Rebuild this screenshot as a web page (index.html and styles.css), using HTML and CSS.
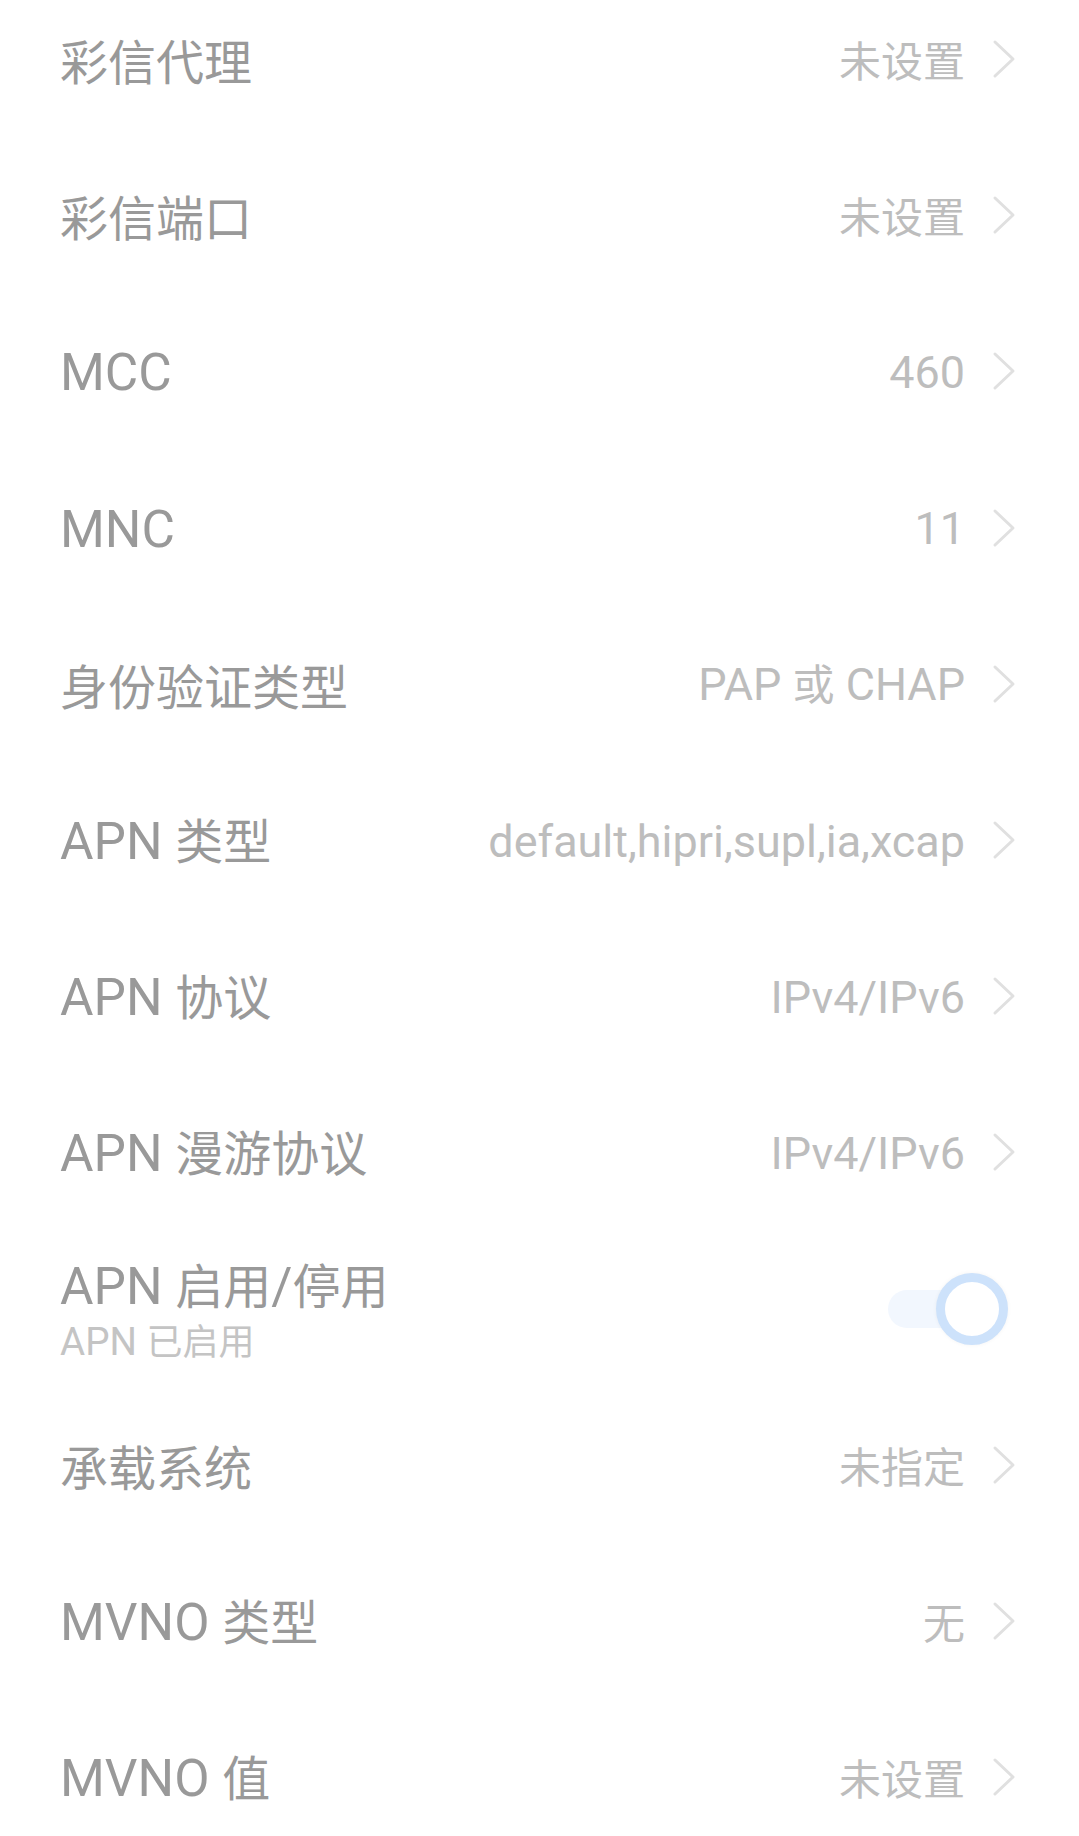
FILE: index.html
```html
<!DOCTYPE html>
<html lang="zh-CN">
<head>
<meta charset="utf-8">
<title>APN</title>
<link rel="stylesheet" href="styles.css">
</head>
<body>
<div class="list">
  <div class="row">
    <div class="title">彩信代理</div>
    <div class="end"><span class="value">未设置</span><svg class="chev" viewBox="0 0 24 40"><polyline points="3,3 21,20 3,37"/></svg></div>
  </div>
  <div class="row">
    <div class="title">彩信端口</div>
    <div class="end"><span class="value">未设置</span><svg class="chev" viewBox="0 0 24 40"><polyline points="3,3 21,20 3,37"/></svg></div>
  </div>
  <div class="row">
    <div class="title"><span class="en">MCC</span></div>
    <div class="end"><span class="value"><span class="en">460</span></span><svg class="chev" viewBox="0 0 24 40"><polyline points="3,3 21,20 3,37"/></svg></div>
  </div>
  <div class="row">
    <div class="title"><span class="en">MNC</span></div>
    <div class="end"><span class="value"><span class="en">11</span></span><svg class="chev" viewBox="0 0 24 40"><polyline points="3,3 21,20 3,37"/></svg></div>
  </div>
  <div class="row">
    <div class="title">身份验证类型</div>
    <div class="end"><span class="value"><span class="en">PAP </span>或<span class="en"> CHAP</span></span><svg class="chev" viewBox="0 0 24 40"><polyline points="3,3 21,20 3,37"/></svg></div>
  </div>
  <div class="row">
    <div class="title"><span class="en">APN </span>类型</div>
    <div class="end"><span class="value"><span class="en">default,hipri,supl,ia,xcap</span></span><svg class="chev" viewBox="0 0 24 40"><polyline points="3,3 21,20 3,37"/></svg></div>
  </div>
  <div class="row">
    <div class="title"><span class="en">APN </span>协议</div>
    <div class="end"><span class="value"><span class="en">IPv4/IPv6</span></span><svg class="chev" viewBox="0 0 24 40"><polyline points="3,3 21,20 3,37"/></svg></div>
  </div>
  <div class="row">
    <div class="title"><span class="en">APN </span>漫游协议</div>
    <div class="end"><span class="value"><span class="en">IPv4/IPv6</span></span><svg class="chev" viewBox="0 0 24 40"><polyline points="3,3 21,20 3,37"/></svg></div>
  </div>
  <div class="row">
    <div class="text">
      <div class="title"><span class="en">APN </span>启用<span class="en">/</span>停用</div>
      <div class="sub"><span class="en">APN </span>已启用</div>
    </div>
    <div class="toggle"><div class="track"></div><div class="knob"></div></div>
  </div>
  <div class="row">
    <div class="title">承载系统</div>
    <div class="end"><span class="value">未指定</span><svg class="chev" viewBox="0 0 24 40"><polyline points="3,3 21,20 3,37"/></svg></div>
  </div>
  <div class="row">
    <div class="title"><span class="en">MVNO </span>类型</div>
    <div class="end"><span class="value">无</span><svg class="chev" viewBox="0 0 24 40"><polyline points="3,3 21,20 3,37"/></svg></div>
  </div>
  <div class="row">
    <div class="title"><span class="en">MVNO </span>值</div>
    <div class="end"><span class="value">未设置</span><svg class="chev" viewBox="0 0 24 40"><polyline points="3,3 21,20 3,37"/></svg></div>
  </div>
</div>
</body>
</html>
```
FILE: styles.css
```css
html, body {
  margin: 0;
  padding: 0;
  background: #ffffff;
  overflow: hidden;
}
body {
  font-family: "Noto Sans CJK SC", "Noto Sans", sans-serif;
  width: 1079px;
  height: 1836px;
}
.list {
  margin-top: -19px;
  display: flex;
  flex-direction: column;
}
.row {
  height: 156.2px;
  display: flex;
  align-items: center;
  justify-content: space-between;
  padding: 0 63px 0 60px;
  box-sizing: border-box;
}
.en {
  font-family: Roboto, "Noto Sans", sans-serif;
  font-size: 1.07em;
}
.title {
  font-size: 48px;
  line-height: 56px;
  color: #999999;
  white-space: nowrap;
}
.text {
  display: flex;
  flex-direction: column;
  margin-top: 4px;
}
.sub {
  font-size: 36px;
  line-height: 48px;
  color: #c4c4c4;
  white-space: nowrap;
}
.end {
  display: flex;
  align-items: center;
  gap: 27px;
}
.value {
  font-size: 42px;
  line-height: 56px;
  color: #bdbdbd;
  white-space: nowrap;
}
.chev {
  width: 24px;
  height: 40px;
  display: block;
}
.chev polyline {
  fill: none;
  stroke: #e0e0e0;
  stroke-width: 3;
  stroke-linecap: round;
  stroke-linejoin: round;
}
.toggle {
  position: relative;
  width: 120px;
  height: 72px;
  margin-right: 8px;
}
.track {
  position: absolute;
  left: 0;
  top: 17px;
  width: 104px;
  height: 38px;
  border-radius: 19px;
  background: #f2f7fe;
}
.knob {
  position: absolute;
  right: 0;
  top: 0;
  width: 72px;
  height: 72px;
  box-sizing: border-box;
  border-radius: 50%;
  border: 9px solid #cde2fb;
  background: #ffffff;
  box-shadow: 0 0 4px rgba(0, 0, 0, 0.05);
}
```
